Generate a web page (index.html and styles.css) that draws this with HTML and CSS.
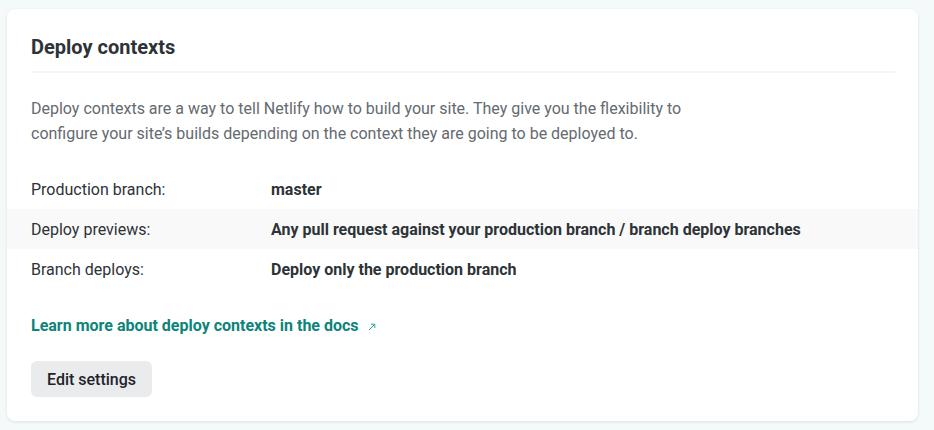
FILE: index.html
```html
<!DOCTYPE html>
<html lang="en">
<head>
<meta charset="utf-8">
<title>Deploy contexts</title>
<link rel="stylesheet" href="styles.css">
</head>
<body>
<section class="card">
  <h2 class="card-title">Deploy contexts</h2>
  <p class="desc">Deploy contexts are a way to tell Netlify how to build your site. They give you the flexibility to configure your site’s builds depending on the context they are going to be deployed to.</p>
  <dl class="rows">
    <div class="row">
      <dt class="label">Production branch:</dt>
      <dd class="value">master</dd>
    </div>
    <div class="row row-alt">
      <dt class="label">Deploy previews:</dt>
      <dd class="value">Any pull request against your production branch / branch deploy branches</dd>
    </div>
    <div class="row">
      <dt class="label">Branch deploys:</dt>
      <dd class="value">Deploy only the production branch</dd>
    </div>
  </dl>
  <a class="doc-link" href="#">Learn more about deploy contexts in the docs<svg class="ext" width="8" height="8" viewBox="0 0 8 8" aria-hidden="true"><path d="M1 7 L6.5 1.5 M3 1.2 H6.8 V5" fill="none" stroke="currentColor" stroke-width="1"/></svg></a>
  <div class="actions">
    <button class="btn" type="button">Edit settings</button>
  </div>
</section>
</body>
</html>
```
FILE: styles.css
```css
* { box-sizing: border-box; }
html, body { margin: 0; }
body {
  background: #f4fafa;
  padding: 9px 16px 9px 7px;
  font-family: Roboto, "Liberation Sans", sans-serif;
  color: #2d3337;
}
.card {
  background: #fff;
  border-radius: 8px;
  box-shadow: 0 1px 3px rgba(20, 40, 50, 0.12);
  padding: 24px 0;
}
.card-title {
  margin: 0 23px 0 24px;
  font-size: 20px;
  line-height: 28px;
  font-weight: 700;
  color: #2d3337;
  padding-bottom: 10px;
  border-bottom: 2px solid #f5f5f5;
}
.desc {
  margin: 23px 24px 0;
  max-width: 660px;
  font-size: 16px;
  line-height: 25px;
  color: #646a70;
}
.rows {
  margin: 23px 0 0;
  padding: 0;
}
.row {
  display: flex;
  align-items: center;
  height: 40px;
  padding: 0 24px;
  font-size: 16px;
}
.row-alt { background: #f9f9f9; }
.label {
  width: 240px;
  flex: none;
  color: #2d3337;
}
.value {
  margin: 0;
  font-weight: 700;
  color: #2d3337;
}
.doc-link {
  display: inline-flex;
  align-items: center;
  gap: 9px;
  margin: 25px 24px 0;
  font-size: 16px;
  line-height: 24px;
  font-weight: 700;
  color: #0b8479;
  text-decoration: none;
}
.ext { color: #2aa6a0; margin-top: 2px; }
.actions {
  margin: 23px 24px 0;
}
.btn {
  height: 36px;
  padding: 0 16px;
  border: 0;
  border-radius: 6px;
  background: #e9ebed;
  color: #1f2428;
  font-family: inherit;
  font-size: 16px;
  font-weight: 500;
  cursor: pointer;
}
```
